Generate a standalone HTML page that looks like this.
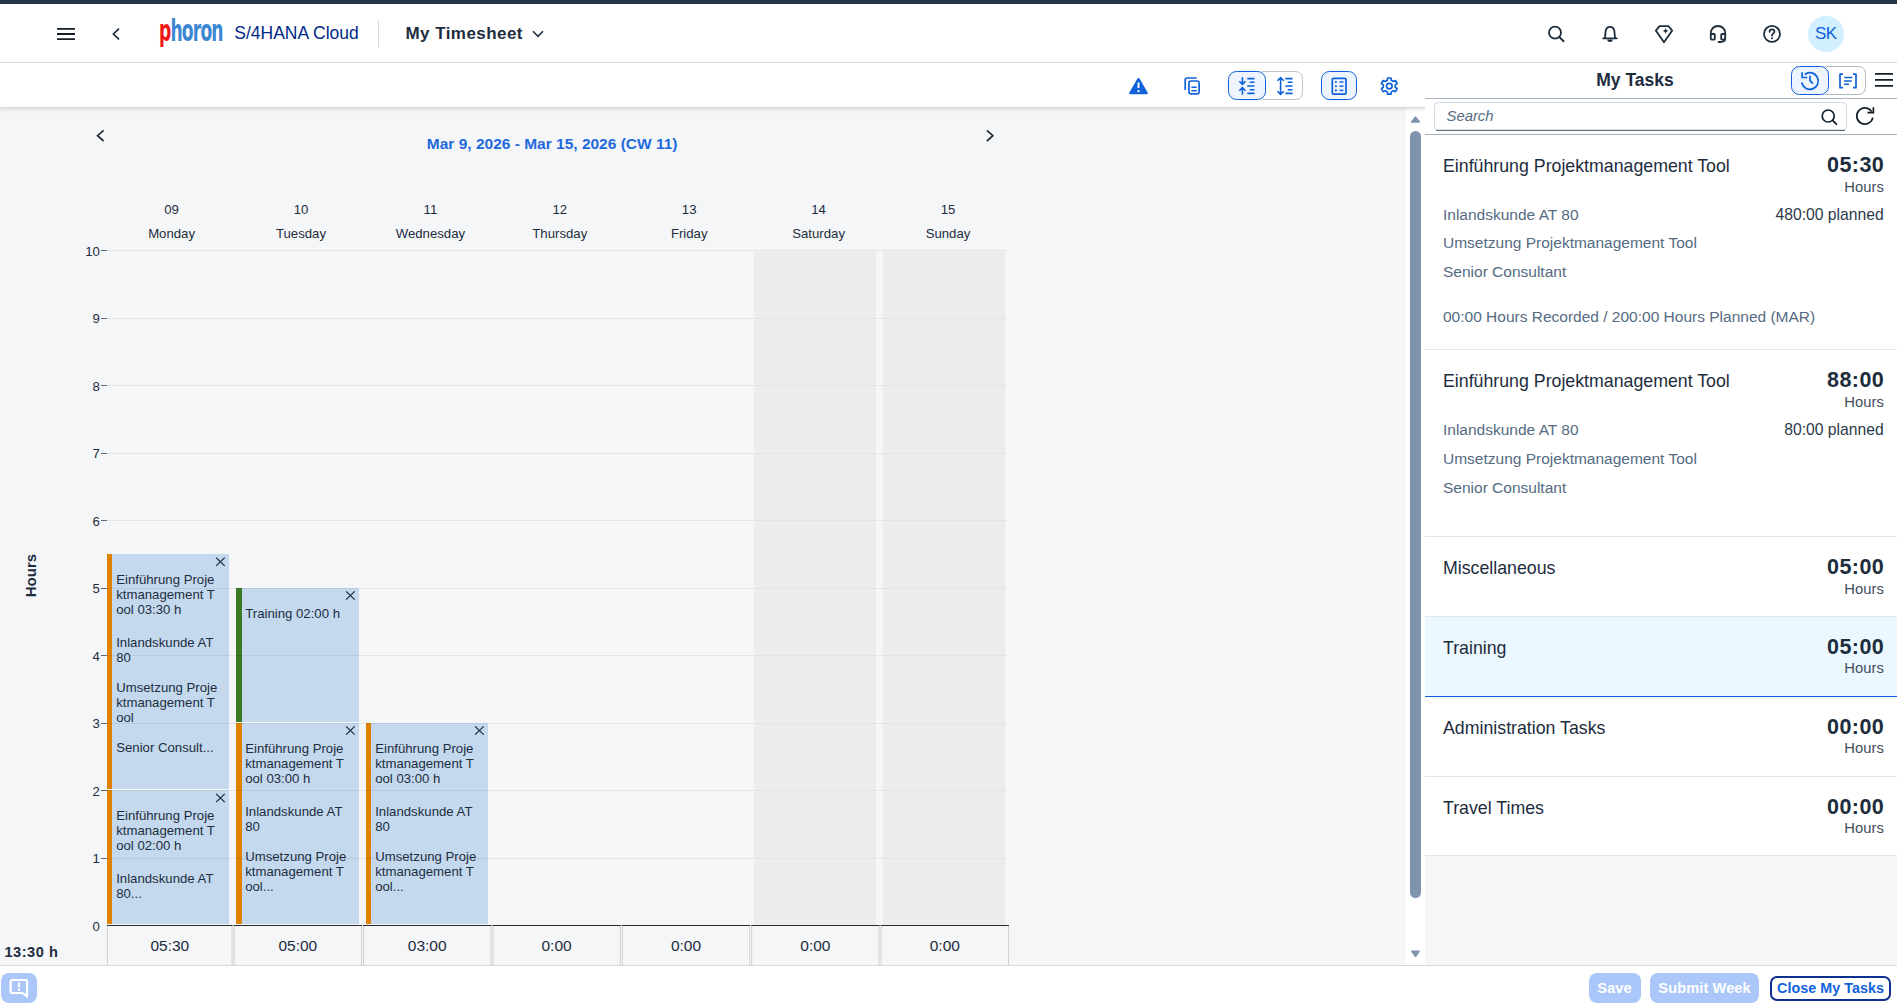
<!DOCTYPE html>
<html lang="en">
<head>
<meta charset="utf-8">
<title>My Timesheet</title>
<style>
*{box-sizing:border-box;margin:0;padding:0}
html,body{width:1897px;height:1006px;overflow:hidden;background:#f5f6f7;font-family:"Liberation Sans",sans-serif;color:#1d2d3e}
.abs{position:absolute}
#topbar{position:absolute;left:0;top:0;width:1897px;height:4px;background:#233449}
#shell{position:absolute;left:0;top:4px;width:1897px;height:59px;background:#fff;border-bottom:1px solid #d9d9d9}
#toolbar{position:absolute;left:0;top:63px;width:1425px;height:45px;background:#fff;border-bottom:1px solid #d9d9d9;box-shadow:0 2px 3px rgba(85,107,130,.16);z-index:2}
#main{position:absolute;left:0;top:108px;width:1406px;height:857px;background:#f5f6f7;overflow:hidden}
#vscroll{position:absolute;left:1406px;top:108px;width:19px;height:857px;background:#fff}
#panel{z-index:2;position:absolute;left:1425px;top:63px;width:472px;height:902px;background:#f5f6f7}
#footer{position:absolute;left:0;top:965px;width:1897px;height:41px;background:#fff;border-top:1px solid #d9d9d9}
svg{position:absolute;overflow:visible;z-index:3}
.t{position:absolute;white-space:nowrap;line-height:1;z-index:3}
</style>
</head>
<body>
<div id="topbar"></div>
<div id="shell"></div>
<div id="toolbar"></div>
<div id="main"></div>
<div id="vscroll"></div>
<div id="panel"></div>
<div id="footer"></div>
<svg style="left:57px;top:27px" width="18" height="14" viewBox="0 0 18 14"><path d="M0 1.9H18M0 7H18M0 12.2H18" stroke="#131e29" stroke-width="1.8" fill="none"/></svg>
<svg style="left:112px;top:28px" width="8" height="12" viewBox="0 0 8 12"><path d="M7 0.6L1.4 6L7 11.4" stroke="#1d2d3e" stroke-width="1.7" fill="none" stroke-linejoin="miter"/></svg>
<div class="t" id="logo" style="left:159.2px;top:9.5px;font-family:'DejaVu Sans',sans-serif;font-size:31px;line-height:40px;font-weight:700;letter-spacing:-1.5px;transform-origin:0 0;transform:scaleX(0.553);"><span style="color:#f01414">p</span><span style="color:#3b87d2">horon</span></div>
<div class="t" style="top:25.00px;font-size:17.5px;color:#002a86;left:234.3px;">S/4HANA Cloud</div>
<div class="abs" style="left:378px;top:20px;width:1px;height:27px;background:#d9d9d9"></div>
<div class="t" style="top:25.00px;font-size:17px;color:#1d2d3e;font-weight:700;letter-spacing:0.44px;left:405.5px;">My Timesheet</div>
<svg style="left:532px;top:30px" width="12" height="8" viewBox="0 0 12 8"><path d="M1 1.3L6 6.3L11 1.3" stroke="#1d2d3e" stroke-width="1.6" fill="none"/></svg>
<svg style="left:1546px;top:24px" width="20" height="20" viewBox="0 0 20 20"><circle cx="9" cy="8.7" r="6" stroke="#1d2d3e" stroke-width="1.8" fill="none"/><path d="M13.3 13L17.6 17.2" stroke="#1d2d3e" stroke-width="1.9" stroke-linecap="round"/></svg>
<svg style="left:1600px;top:24px" width="20" height="20" viewBox="0 0 20 20"><path d="M3.2 14.3H16.8 M4.6 14.3C5.6 12.6 5.2 9.5 5.6 7.2C6 4.6 7.7 2.9 10 2.9C12.3 2.9 14 4.6 14.4 7.2C14.8 9.5 14.4 12.6 15.4 14.3" stroke="#1d2d3e" stroke-width="1.8" fill="none" stroke-linecap="round" stroke-linejoin="round"/><path d="M7.3 15.4a2.7 2.5 0 0 0 5.4 0z" fill="#1d2d3e"/></svg>
<svg style="left:1654px;top:24px" width="20" height="20" viewBox="0 0 20 20"><path d="M5.6 2.2H14.6L18.2 6.6L10 18.2L1.8 6.6Z" stroke="#1d2d3e" stroke-width="1.8" fill="none" stroke-linejoin="round"/><path d="M11.6 3.8C12 6 12.5 6.6 14.8 7C12.5 7.4 12 8 11.6 10.2C11.2 8 10.7 7.4 8.4 7C10.7 6.6 11.2 6 11.6 3.8Z" fill="#1d2d3e"/></svg>
<svg style="left:1708px;top:24px" width="20" height="20" viewBox="0 0 20 20"><path d="M2.8 11V9.2C2.8 4.9 5.9 2 10 2C14.1 2 17.2 4.9 17.2 9.2V11" stroke="#1d2d3e" stroke-width="1.8" fill="none"/><rect x="2.8" y="10" width="4" height="5.6" rx="0.8" stroke="#1d2d3e" stroke-width="1.8" fill="none"/><rect x="13.2" y="10" width="4" height="5.6" rx="0.8" stroke="#1d2d3e" stroke-width="1.8" fill="none"/><path d="M17.2 14.5C17.2 17 15 18 12.4 18H10.6" stroke="#1d2d3e" stroke-width="1.8" fill="none" stroke-linecap="round"/></svg>
<svg style="left:1762px;top:24px" width="20" height="20" viewBox="0 0 20 20"><circle cx="10" cy="9.9" r="8" stroke="#1d2d3e" stroke-width="1.8" fill="none"/><path d="M7.6 7.8C7.6 6.3 8.6 5.4 10 5.4C11.4 5.4 12.4 6.3 12.4 7.6C12.4 9.3 10 9.4 10 11.6" stroke="#1d2d3e" stroke-width="1.8" fill="none" stroke-linecap="round"/><circle cx="10" cy="14.3" r="1.05" fill="#1d2d3e"/></svg>
<div class="abs" style="left:1808px;top:16px;width:36px;height:36px;border-radius:50%;background:#d1efff"></div>
<div class="t" style="top:25.00px;font-size:17px;color:#0f5fd7;letter-spacing:-0.6px;left:1525.7px;width:600px;text-align:center;">SK</div>
<svg style="left:0;top:0" width="1897" height="110" viewBox="0 0 1897 110">
<path d="M1138.5 79.2L1146.6 93H1130.4Z" fill="#0f62d9" stroke="#0f62d9" stroke-width="2.4" stroke-linejoin="round"/><path d="M1138.5 82.4V88" stroke="#fff" stroke-width="1.9"/><rect x="1137.5" y="90.1" width="2" height="2" fill="#fff"/>
<path d="M1196.6 78H1187.2Q1185.2 78 1185.2 80V90" stroke="#0f62d9" stroke-width="1.7" fill="none"/><rect x="1188.9" y="81" width="10.2" height="12.9" rx="2.2" stroke="#0f62d9" stroke-width="1.7" fill="none"/><path d="M1191.3 87.3H1196.7M1191.3 90.8H1196.7" stroke="#0f62d9" stroke-width="1.6"/>
<path d="M1262 71.5H1295Q1302.5 71.5 1302.5 79.5V91.5Q1302.5 99.5 1295 99.5H1262" stroke="#bcc3ca" stroke-width="1" fill="#fff"/><rect x="1228.5" y="71.5" width="37" height="28" rx="8" stroke="#0f62d9" stroke-width="1" fill="#edf4fd"/>
<path d="M1242.4 77.2V84.2M1239.3 81.3L1242.4 84.4L1245.5 81.3M1242.4 94.8V87.8M1239.3 90.7L1242.4 87.6L1245.5 90.7" stroke="#0f62d9" stroke-width="1.6" fill="none"/><path d="M1247.3 78.6H1254.5M1249.7 82.3H1254.5M1247.3 86.0H1254.5M1249.7 89.7H1254.5M1247.3 93.4H1254.5" stroke="#0f62d9" stroke-width="1.6"/>
<path d="M1280.6 78V94M1277.4 80.8L1280.6 77.6L1283.8 80.8M1277.4 91.2L1280.6 94.4L1283.8 91.2" stroke="#0f62d9" stroke-width="1.6" fill="none"/><path d="M1285.3 78.6H1292.6M1287.7 82.3H1292.6M1285.3 86.0H1292.6M1287.7 89.7H1292.6M1285.3 93.4H1292.6" stroke="#0f62d9" stroke-width="1.6"/>
<rect x="1321.5" y="71.5" width="35" height="28" rx="8" stroke="#0f62d9" stroke-width="1" fill="#edf4fd"/><rect x="1332.3" y="78.3" width="13.7" height="15.8" rx="1.2" stroke="#0f62d9" stroke-width="1.7" fill="none"/><circle cx="1335.9" cy="82" r="1.05" fill="#0f62d9"/><path d="M1339.6 82H1343.4" stroke="#0f62d9" stroke-width="1.5"/><circle cx="1335.9" cy="86.2" r="1.05" fill="#0f62d9"/><path d="M1339.6 86.2H1343.4" stroke="#0f62d9" stroke-width="1.5"/><circle cx="1335.9" cy="90.4" r="1.05" fill="#0f62d9"/><path d="M1339.6 90.4H1343.4" stroke="#0f62d9" stroke-width="1.5"/>
<path d="M1387.32 80.33L1387.57 77.98L1391.03 77.98L1391.28 80.33L1393.31 81.50L1395.46 80.54L1397.20 83.54L1395.29 84.93L1395.29 87.27L1397.20 88.66L1395.46 91.66L1393.31 90.70L1391.28 91.87L1391.03 94.22L1387.57 94.22L1387.32 91.87L1385.29 90.70L1383.14 91.66L1381.40 88.66L1383.31 87.27L1383.31 84.93L1381.40 83.54L1383.14 80.54L1385.29 81.50Z" stroke="#0f62d9" stroke-width="1.7" fill="none" stroke-linejoin="round"/><circle cx="1389.3" cy="86.1" r="2.8" stroke="#0f62d9" stroke-width="1.7" fill="none"/>
</svg>
<svg id="chart" style="left:0;top:0;font-size:13.2px;fill:#1d2d3e" width="1425" height="1006" viewBox="0 0 1425 1006">
<rect x="753.90" y="251.6" width="122" height="673.2" fill="#ebecec"/><rect x="883.30" y="251.6" width="122" height="673.2" fill="#ebecec"/>
<rect x="107" y="858" width="899" height="1" fill="#e3e4e5"/><rect x="107" y="790" width="899" height="1" fill="#e3e4e5"/><rect x="107" y="723" width="899" height="1" fill="#e3e4e5"/><rect x="107" y="655" width="899" height="1" fill="#e3e4e5"/><rect x="107" y="588" width="899" height="1" fill="#e3e4e5"/><rect x="107" y="520" width="899" height="1" fill="#e3e4e5"/><rect x="107" y="453" width="899" height="1" fill="#e3e4e5"/><rect x="107" y="385" width="899" height="1" fill="#e3e4e5"/><rect x="107" y="318" width="899" height="1" fill="#e3e4e5"/><rect x="107" y="250" width="899" height="1" fill="#e3e4e5"/>
<rect x="107" y="554" width="122" height="235" fill="#c4d9ee"/><rect x="107" y="554" width="5" height="235" fill="#df8200"/>
<rect x="107" y="790" width="122" height="134" fill="#c4d9ee"/><rect x="107" y="790" width="5" height="134" fill="#df8200"/>
<rect x="236" y="588" width="123" height="134" fill="#c4d9ee"/><rect x="236" y="588" width="6" height="134" fill="#3a7a22"/>
<rect x="236" y="723" width="123" height="201" fill="#c4d9ee"/><rect x="236" y="723" width="6" height="201" fill="#df8200"/>
<rect x="366" y="723" width="122" height="201" fill="#c4d9ee"/><rect x="366" y="723" width="5" height="201" fill="#df8200"/>
<rect x="107" y="723" width="122" height="1" fill="#000" fill-opacity="0.07"/><rect x="107" y="655" width="122" height="1" fill="#000" fill-opacity="0.07"/><rect x="107" y="588" width="122" height="1" fill="#000" fill-opacity="0.07"/><rect x="107" y="858" width="122" height="1" fill="#000" fill-opacity="0.07"/><rect x="107" y="790" width="122" height="1" fill="#000" fill-opacity="0.07"/><rect x="236" y="655" width="123" height="1" fill="#000" fill-opacity="0.07"/><rect x="236" y="588" width="123" height="1" fill="#000" fill-opacity="0.07"/><rect x="236" y="858" width="123" height="1" fill="#000" fill-opacity="0.07"/><rect x="236" y="790" width="123" height="1" fill="#000" fill-opacity="0.07"/><rect x="236" y="723" width="123" height="1" fill="#000" fill-opacity="0.07"/><rect x="366" y="858" width="122" height="1" fill="#000" fill-opacity="0.07"/><rect x="366" y="790" width="122" height="1" fill="#000" fill-opacity="0.07"/><rect x="366" y="723" width="122" height="1" fill="#000" fill-opacity="0.07"/>
<text x="99.8" y="931" text-anchor="end">0</text><rect x="101" y="858.00" width="6" height="1" fill="#5b6b7c"/><text x="99.8" y="863" text-anchor="end">1</text><rect x="101" y="790.00" width="6" height="1" fill="#5b6b7c"/><text x="99.8" y="796" text-anchor="end">2</text><rect x="101" y="723.00" width="6" height="1" fill="#5b6b7c"/><text x="99.8" y="728" text-anchor="end">3</text><rect x="101" y="655.00" width="6" height="1" fill="#5b6b7c"/><text x="99.8" y="661" text-anchor="end">4</text><rect x="101" y="588.00" width="6" height="1" fill="#5b6b7c"/><text x="99.8" y="593" text-anchor="end">5</text><rect x="101" y="520.00" width="6" height="1" fill="#5b6b7c"/><text x="99.8" y="526" text-anchor="end">6</text><rect x="101" y="453.00" width="6" height="1" fill="#5b6b7c"/><text x="99.8" y="458" text-anchor="end">7</text><rect x="101" y="385.00" width="6" height="1" fill="#5b6b7c"/><text x="99.8" y="391" text-anchor="end">8</text><rect x="101" y="318.00" width="6" height="1" fill="#5b6b7c"/><text x="99.8" y="323" text-anchor="end">9</text><rect x="101" y="250.00" width="6" height="1" fill="#5b6b7c"/><text x="99.8" y="256" text-anchor="end">10</text>
<path d="M216.10 557.65L224.70 565.85M224.70 557.65L216.10 565.85" stroke="#1d2d3e" stroke-width="1.3" fill="none"/>
<text x="116.20" y="583.75">Einführung Proje</text><text x="116.20" y="598.75">ktmanagement T</text><text x="116.20" y="613.75">ool 03:30 h</text><text x="116.20" y="646.75">Inlandskunde AT</text><text x="116.20" y="661.75">80</text><text x="116.20" y="691.75">Umsetzung Proje</text><text x="116.20" y="706.75">ktmanagement T</text><text x="116.20" y="721.75">ool</text><text x="116.20" y="751.75">Senior Consult...</text>
<path d="M216.10 793.90L224.70 802.10M224.70 793.90L216.10 802.10" stroke="#1d2d3e" stroke-width="1.3" fill="none"/>
<text x="116.20" y="820.00">Einführung Proje</text><text x="116.20" y="835.00">ktmanagement T</text><text x="116.20" y="850.00">ool 02:00 h</text><text x="116.20" y="883.00">Inlandskunde AT</text><text x="116.20" y="898.00">80...</text>
<path d="M346.10 591.40L354.70 599.60M354.70 591.40L346.10 599.60" stroke="#1d2d3e" stroke-width="1.3" fill="none"/>
<text x="245.20" y="617.50">Training 02:00 h</text>
<path d="M346.10 726.40L354.70 734.60M354.70 726.40L346.10 734.60" stroke="#1d2d3e" stroke-width="1.3" fill="none"/>
<text x="245.20" y="752.50">Einführung Proje</text><text x="245.20" y="767.50">ktmanagement T</text><text x="245.20" y="782.50">ool 03:00 h</text><text x="245.20" y="815.50">Inlandskunde AT</text><text x="245.20" y="830.50">80</text><text x="245.20" y="860.50">Umsetzung Proje</text><text x="245.20" y="875.50">ktmanagement T</text><text x="245.20" y="890.50">ool...</text>
<path d="M475.10 726.40L483.70 734.60M483.70 726.40L475.10 734.60" stroke="#1d2d3e" stroke-width="1.3" fill="none"/>
<text x="375.20" y="752.50">Einführung Proje</text><text x="375.20" y="767.50">ktmanagement T</text><text x="375.20" y="782.50">ool 03:00 h</text><text x="375.20" y="815.50">Inlandskunde AT</text><text x="375.20" y="830.50">80</text><text x="375.20" y="860.50">Umsetzung Proje</text><text x="375.20" y="875.50">ktmanagement T</text><text x="375.20" y="890.50">ool...</text>
<path d="M107.50 926V965M232.10 926V965" stroke="#d0d1d3" stroke-width="1" fill="none"/><rect x="107.00" y="925" width="125.60" height="1" fill="#2a2a2a"/><text x="169.80" y="951" text-anchor="middle" font-size="15.5">05:30</text>
<path d="M234.10 926V965M361.50 926V965" stroke="#d0d1d3" stroke-width="1" fill="none"/><rect x="233.60" y="925" width="128.40" height="1" fill="#2a2a2a"/><text x="297.80" y="951" text-anchor="middle" font-size="15.5">05:00</text>
<path d="M363.50 926V965M490.90 926V965" stroke="#d0d1d3" stroke-width="1" fill="none"/><rect x="363.00" y="925" width="128.40" height="1" fill="#2a2a2a"/><text x="427.20" y="951" text-anchor="middle" font-size="15.5">03:00</text>
<path d="M492.90 926V965M620.30 926V965" stroke="#d0d1d3" stroke-width="1" fill="none"/><rect x="492.40" y="925" width="128.40" height="1" fill="#2a2a2a"/><text x="556.60" y="951" text-anchor="middle" font-size="15.5">0:00</text>
<path d="M622.30 926V965M749.70 926V965" stroke="#d0d1d3" stroke-width="1" fill="none"/><rect x="621.80" y="925" width="128.40" height="1" fill="#2a2a2a"/><text x="686.00" y="951" text-anchor="middle" font-size="15.5">0:00</text>
<path d="M751.70 926V965M879.10 926V965" stroke="#d0d1d3" stroke-width="1" fill="none"/><rect x="751.20" y="925" width="128.40" height="1" fill="#2a2a2a"/><text x="815.40" y="951" text-anchor="middle" font-size="15.5">0:00</text>
<path d="M881.10 926V965M1008.50 926V965" stroke="#d0d1d3" stroke-width="1" fill="none"/><rect x="880.60" y="925" width="128.40" height="1" fill="#2a2a2a"/><text x="944.80" y="951" text-anchor="middle" font-size="15.5">0:00</text>
<text x="171.60" y="214" text-anchor="middle">09</text><text x="171.60" y="238" text-anchor="middle">Monday</text>
<text x="301.00" y="214" text-anchor="middle">10</text><text x="301.00" y="238" text-anchor="middle">Tuesday</text>
<text x="430.40" y="214" text-anchor="middle">11</text><text x="430.40" y="238" text-anchor="middle">Wednesday</text>
<text x="559.80" y="214" text-anchor="middle">12</text><text x="559.80" y="238" text-anchor="middle">Thursday</text>
<text x="689.20" y="214" text-anchor="middle">13</text><text x="689.20" y="238" text-anchor="middle">Friday</text>
<text x="818.60" y="214" text-anchor="middle">14</text><text x="818.60" y="238" text-anchor="middle">Saturday</text>
<text x="948.00" y="214" text-anchor="middle">15</text><text x="948.00" y="238" text-anchor="middle">Sunday</text>
<text x="426.8" y="149" font-size="15.5" font-weight="700" fill="#1f69de">Mar 9, 2026 - Mar 15, 2026 (CW 11)</text>
<path d="M103.6 130.4L97.6 135.7L103.6 141" stroke="#1d2d3e" stroke-width="1.7" fill="none"/><path d="M986.9 130.4L992.9 135.7L986.9 141" stroke="#1d2d3e" stroke-width="1.7" fill="none"/>
<text transform="translate(36.2 575.6) rotate(-90)" text-anchor="middle" font-size="15" font-weight="700">Hours</text>
<text x="4.5" y="957" font-size="14.6" font-weight="700" letter-spacing="0.5">13:30 h</text>
</svg>
<div class="abs" style="z-index:2;left:1425px;top:63px;width:472px;height:36px;background:#fff;border-bottom:1px solid #a7b3bf"></div>
<div class="abs" style="z-index:2;left:1425px;top:99px;width:472px;height:36px;background:#fff;border-bottom:1px solid #a7b3bf"></div>
<div class="t" style="top:72.00px;font-size:17.5px;color:#1d2d3e;font-weight:700;left:1335.0px;width:600px;text-align:center;">My Tasks</div>
<svg style="left:0;top:0" width="1897" height="140" viewBox="0 0 1897 140">
<path d="M1825 66.5H1858Q1865.5 66.5 1865.5 74.5V86.5Q1865.5 94.5 1858 94.5H1825" stroke="#b1b9c1" fill="#fff"/><rect x="1791.5" y="66.5" width="37" height="28" rx="8" stroke="#0f62d9" fill="#edf4fd"/>
<path d="M1804.79 74.46A8.3 8.3 0 1 1 1801.73 82.44" stroke="#0f62d9" stroke-width="1.7" fill="none" transform="rotate(0)"/><path d="M1802.1 72.3V77.5H1807.3" stroke="#0f62d9" stroke-width="1.7" fill="none"/><path d="M1810 75.8V80.6L1812.9 83.6" stroke="#0f62d9" stroke-width="1.7" fill="none"/>
<path d="M1843 74.2H1840V87.7H1843M1853 74.2H1856V87.7H1853" stroke="#0f62d9" stroke-width="1.7" fill="none" stroke-linejoin="round"/><path d="M1844.3 77.5H1852.3M1844 80.9H1851.7M1844 84.3H1849" stroke="#0f62d9" stroke-width="1.5" fill="none"/>
<path d="M1875 73.9H1893M1875 79.9H1893M1875 85.9H1893" stroke="#131e29" stroke-width="1.8"/>
<rect x="1434.5" y="102.5" width="412" height="28" rx="4" fill="#fff" stroke="#d3d9df"/><path d="M1436 130.3H1845" stroke="#60748a" stroke-width="1.2"/>
<circle cx="1828.2" cy="116" r="6" stroke="#131e29" stroke-width="1.7" fill="none"/><path d="M1832.6 120.4L1836.4 124.2" stroke="#131e29" stroke-width="1.8" stroke-linecap="round"/>
<path d="M1872.82 117.68A8.1 8.1 0 1 1 1871.69 111.59" stroke="#131e29" stroke-width="1.7" fill="none"/><path d="M1873.4 107.2V112.6H1867.4" stroke="#131e29" stroke-width="1.7" fill="none"/>
</svg>
<div class="t" style="top:109.00px;font-size:14.8px;color:#556b82;left:1446.6px;font-style:italic;">Search</div>
<div class="abs" style="z-index:2;left:1425px;top:135px;width:472px;height:215px;background:#fff;border-bottom:1px solid #e5e5e5"></div>
<div class="t" style="top:158.00px;font-size:17.75px;color:#1d2d3e;left:1443px;">Einführung Projektmanagement Tool</div>
<div class="t" style="top:155.00px;font-size:21.5px;color:#1d2d3e;font-weight:700;letter-spacing:0.4px;right:12.899999999999954px;">05:30</div>
<div class="t" style="top:180.00px;font-size:14.8px;color:#3f4e5e;right:13.200000000000045px;">Hours</div>
<div class="t" style="top:207.00px;font-size:15.5px;color:#556b82;left:1443px;">Inlandskunde AT 80</div>
<div class="t" style="top:235.00px;font-size:15.5px;color:#556b82;left:1443px;">Umsetzung Projektmanagement Tool</div>
<div class="t" style="top:264.00px;font-size:15.5px;color:#556b82;left:1443px;">Senior Consultant</div>
<div class="t" style="top:207.00px;font-size:15.7px;color:#2b3a4a;right:13.299999999999955px;">480:00 planned</div>
<div class="t" style="top:309.00px;font-size:15.5px;color:#556b82;left:1443px;">00:00 Hours Recorded / 200:00 Hours Planned (MAR)</div>
<div class="abs" style="z-index:2;left:1425px;top:350px;width:472px;height:187px;background:#fff;border-bottom:1px solid #e5e5e5"></div>
<div class="t" style="top:373.00px;font-size:17.75px;color:#1d2d3e;left:1443px;">Einführung Projektmanagement Tool</div>
<div class="t" style="top:370.00px;font-size:21.5px;color:#1d2d3e;font-weight:700;letter-spacing:0.4px;right:12.899999999999954px;">88:00</div>
<div class="t" style="top:395.00px;font-size:14.8px;color:#3f4e5e;right:13.200000000000045px;">Hours</div>
<div class="t" style="top:422.00px;font-size:15.5px;color:#556b82;left:1443px;">Inlandskunde AT 80</div>
<div class="t" style="top:451.00px;font-size:15.5px;color:#556b82;left:1443px;">Umsetzung Projektmanagement Tool</div>
<div class="t" style="top:480.00px;font-size:15.5px;color:#556b82;left:1443px;">Senior Consultant</div>
<div class="t" style="top:422.00px;font-size:15.7px;color:#2b3a4a;right:13.299999999999955px;">80:00 planned</div>
<div class="abs" style="z-index:2;left:1425px;top:537px;width:472px;height:80px;background:#fff;border-bottom:1px solid #e5e5e5"></div>
<div class="t" style="top:560.00px;font-size:17.75px;color:#1d2d3e;left:1443px;">Miscellaneous</div>
<div class="t" style="top:557.00px;font-size:21.5px;color:#1d2d3e;font-weight:700;letter-spacing:0.4px;right:12.899999999999954px;">05:00</div>
<div class="t" style="top:582.00px;font-size:14.8px;color:#3f4e5e;right:13.200000000000045px;">Hours</div>
<div class="abs" style="z-index:2;left:1425px;top:617px;width:472px;height:80px;background:#ebf8ff;border-bottom:1px solid #0f62d9"></div>
<div class="t" style="top:640.00px;font-size:17.75px;color:#1d2d3e;left:1443px;">Training</div>
<div class="t" style="top:637.00px;font-size:21.5px;color:#1d2d3e;font-weight:700;letter-spacing:0.4px;right:12.899999999999954px;">05:00</div>
<div class="t" style="top:661.00px;font-size:14.8px;color:#3f4e5e;right:13.200000000000045px;">Hours</div>
<div class="abs" style="z-index:2;left:1425px;top:697px;width:472px;height:80px;background:#fff;border-bottom:1px solid #e5e5e5"></div>
<div class="t" style="top:720.00px;font-size:17.75px;color:#1d2d3e;left:1443px;">Administration Tasks</div>
<div class="t" style="top:717.00px;font-size:21.5px;color:#1d2d3e;font-weight:700;letter-spacing:0.4px;right:12.899999999999954px;">00:00</div>
<div class="t" style="top:741.00px;font-size:14.8px;color:#3f4e5e;right:13.200000000000045px;">Hours</div>
<div class="abs" style="z-index:2;left:1425px;top:777px;width:472px;height:79px;background:#fff;border-bottom:1px solid #e5e5e5"></div>
<div class="t" style="top:800.00px;font-size:17.75px;color:#1d2d3e;left:1443px;">Travel Times</div>
<div class="t" style="top:797.00px;font-size:21.5px;color:#1d2d3e;font-weight:700;letter-spacing:0.4px;right:12.899999999999954px;">00:00</div>
<div class="t" style="top:821.00px;font-size:14.8px;color:#3f4e5e;right:13.200000000000045px;">Hours</div>
<svg style="left:1400px;top:107px" width="25" height="858" viewBox="1400 107 25 858"><path d="M1415.5 117.2L1419.2 121.9H1411.8Z" fill="#7f93ad" stroke="#7f93ad" stroke-width="1.8" stroke-linejoin="round"/><rect x="1410" y="131" width="11" height="767" rx="5.5" fill="#7f93ad"/><path d="M1415.5 956.2L1419.1 951.2H1411.9Z" fill="#7f93ad" stroke="#7f93ad" stroke-width="1.6" stroke-linejoin="round"/></svg>
<div class="abs" style="left:1px;top:973px;width:36px;height:30px;border-radius:8px;background:#abc7fa"></div>
<svg style="left:1px;top:973px" width="36" height="30" viewBox="0 0 36 30"><path d="M11.6 7H24.1Q26.1 7 26.1 9V23.6L21.6 20H11.6Q9.6 20 9.6 18V9Q9.6 7 11.6 7Z" stroke="#fff" stroke-width="2.2" fill="none" stroke-linejoin="round"/><path d="M18 9.4V14.2" stroke="#fff" stroke-width="2.2"/><rect x="16.8" y="15.5" width="2.4" height="2.3" rx="0.6" fill="#fff"/></svg>
<div class="abs" style="left:1589px;top:973px;width:52px;height:30px;border-radius:8px;background:#abc7fa"></div>
<div class="t" style="top:981.00px;font-size:14.6px;color:#fff;font-weight:700;letter-spacing:0.1px;left:1314.55px;width:600px;text-align:center;">Save</div>
<div class="abs" style="left:1650px;top:973px;width:109px;height:30px;border-radius:8px;background:#abc7fa"></div>
<div class="t" style="top:981.00px;font-size:14.6px;color:#fff;font-weight:700;letter-spacing:0.1px;left:1404.55px;width:600px;text-align:center;">Submit Week</div>
<div class="abs" style="left:1770px;top:976px;width:121px;height:25px;border-radius:7px;background:#fff;border:2px solid #0d2f8f"></div>
<div class="t" style="top:981.00px;font-size:14.3px;color:#0f62d9;font-weight:700;letter-spacing:0.05px;left:1530.525px;width:600px;text-align:center;">Close My Tasks</div>
</body>
</html>
